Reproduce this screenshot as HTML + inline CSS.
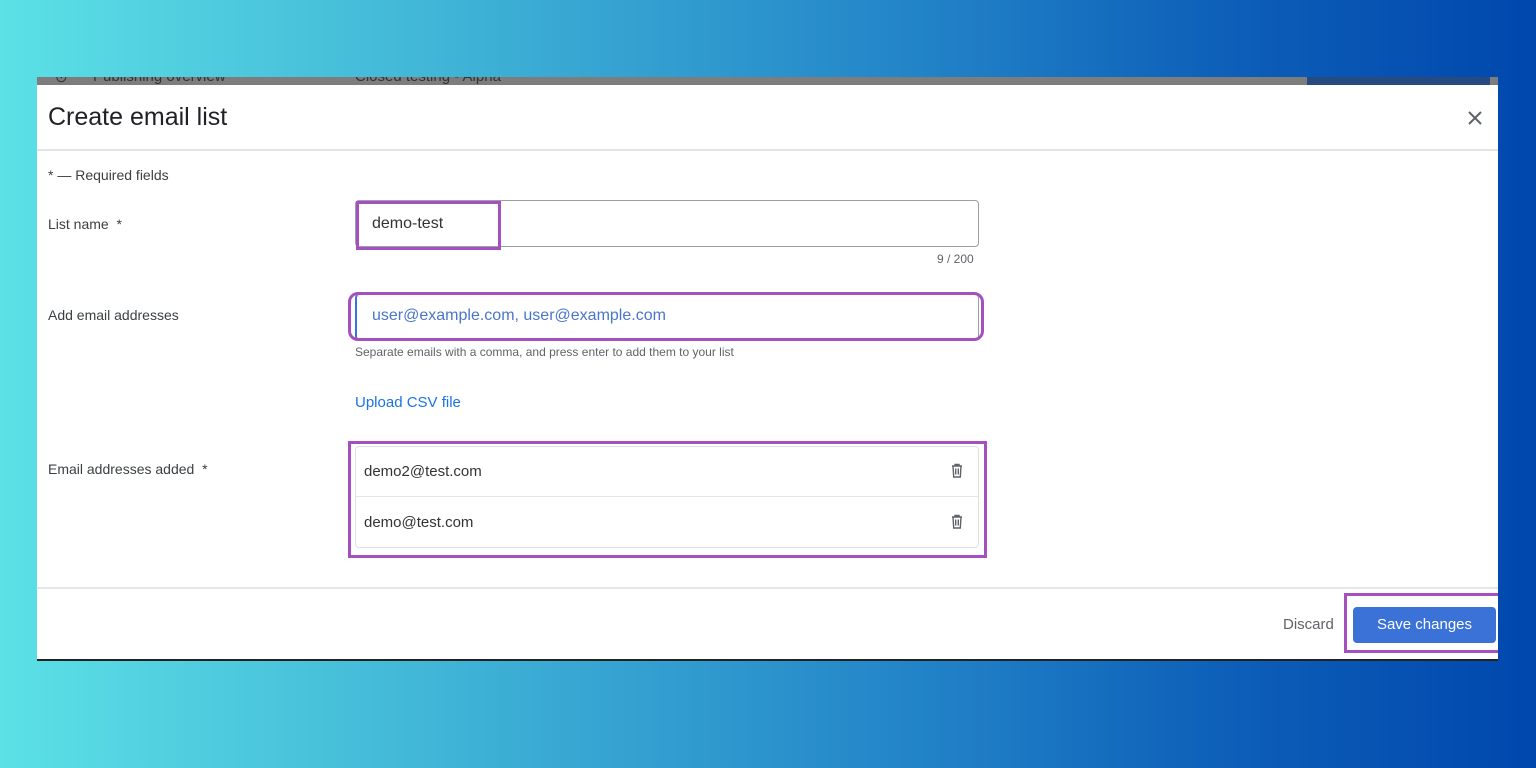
<!DOCTYPE html>
<html><head><meta charset="utf-8"><style>
*{margin:0;padding:0;box-sizing:border-box}
body{width:1536px;height:768px;overflow:hidden;position:relative;font-family:"Liberation Sans",sans-serif;
background:linear-gradient(90deg,#5ce1e6 0%,#3fb3d6 30%,#2283c8 60%,#0d5fb8 80%,#0047ad 100%)}
.top{position:absolute;left:37px;top:77px;width:1461px;height:8px;background:#7d7d7d;overflow:hidden}
.top .dk{position:absolute;left:1270px;top:0;width:183px;height:8px;background:#274a80}
.top span{position:absolute;top:-9px;font-size:15px;color:#333}
.modal{position:absolute;left:37px;top:85px;width:1461px;height:576px;background:#fff;border-bottom:2px solid #222}
.hdr{height:66px;border-bottom:2px solid #e3e3e3;position:relative}
.hdr h1{position:absolute;left:11px;top:18px;font-size:25px;font-weight:normal;color:#202124}
.x{position:absolute;left:1429px;top:24px}
.t{position:absolute;font-size:14px;color:#3c4043}
.box{position:absolute;border:1px solid #9aa0a6;border-radius:4px}
.hl{position:absolute;border:3px solid #a64fbf}
.footer{position:absolute;left:0;top:502px;width:1461px;border-top:2px solid #e6e6e6;height:72px}
.btn{position:absolute;left:1316px;top:522px;width:143px;height:36px;background:#3a72d8;border-radius:4px;color:#fff;font-size:15px;text-align:center;line-height:36px}
</style></head><body>
<div class="top"><span style="left:18px">⊙</span><span style="left:56px">Publishing overview</span><span style="left:318px">Closed testing - Alpha</span><div class="dk"></div></div>
<div class="modal">
<div class="hdr"><h1>Create email list</h1>
<svg class="x" width="18" height="18" viewBox="0 0 18 18"><path d="M3 3L15 15M15 3L3 15" stroke="#5f6368" stroke-width="2"/></svg></div>
<div class="t" style="left:11px;top:82px">* — Required fields</div>
<div class="t" style="left:11px;top:131px">List name&nbsp; *</div>
<div class="box" style="left:318px;top:115px;width:624px;height:47px"></div>
<div class="t" style="left:335px;top:130px;font-size:16px;color:#333">demo-test</div>
<div class="hl" style="left:319px;top:116px;width:145px;height:49px"></div>
<div class="t" style="left:900px;top:167px;font-size:12px;color:#5f6368">9 / 200</div>
<div class="t" style="left:11px;top:222px">Add email addresses</div>
<div class="box" style="left:318px;top:209px;width:624px;height:46px;border-left:2px solid #3a72d8"></div>
<div class="hl" style="left:311px;top:207px;width:636px;height:49px;border-radius:10px"></div>
<div class="t" style="left:335px;top:222px;font-size:16px;color:#4a76c9">user@example.com, user@example.com</div>
<div class="t" style="left:318px;top:260px;font-size:12px;color:#5f6368">Separate emails with a comma, and press enter to add them to your list</div>
<div class="t" style="left:318px;top:309px;font-size:15px;color:#1a73e8">Upload CSV file</div>
<div class="t" style="left:11px;top:376px">Email addresses added&nbsp; *</div>
<div class="hl" style="left:311px;top:356px;width:639px;height:117px"></div>
<div class="box" style="left:318px;top:361px;width:624px;height:102px;border-color:#e0e0e0"></div>
<div style="position:absolute;left:319px;top:411px;width:622px;height:1px;background:#e6e6e6"></div>
<div class="t" style="left:327px;top:378px;font-size:15px;color:#333">demo2@test.com</div>
<div class="t" style="left:327px;top:429px;font-size:15px;color:#333">demo@test.com</div>
<svg style="position:absolute;left:912px;top:378px" width="16" height="16" viewBox="0 0 16 16"><path d="M3 3h10M6 3V1.5h4V3M4 3l.7 11h6.6L12 3M6.7 5.5v6M9.3 5.5v6" fill="none" stroke="#5f6368" stroke-width="1.4"/></svg>
<svg style="position:absolute;left:912px;top:429px" width="16" height="16" viewBox="0 0 16 16"><path d="M3 3h10M6 3V1.5h4V3M4 3l.7 11h6.6L12 3M6.7 5.5v6M9.3 5.5v6" fill="none" stroke="#5f6368" stroke-width="1.4"/></svg>
<div class="footer"></div>
<div class="t" style="left:1246px;top:531px;font-size:15px;color:#5f6368">Discard</div>
<div class="btn">Save changes</div>
<div class="hl" style="left:1307px;top:508px;width:154px;height:60px;border-right:none"></div>
</div>
</body></html>
